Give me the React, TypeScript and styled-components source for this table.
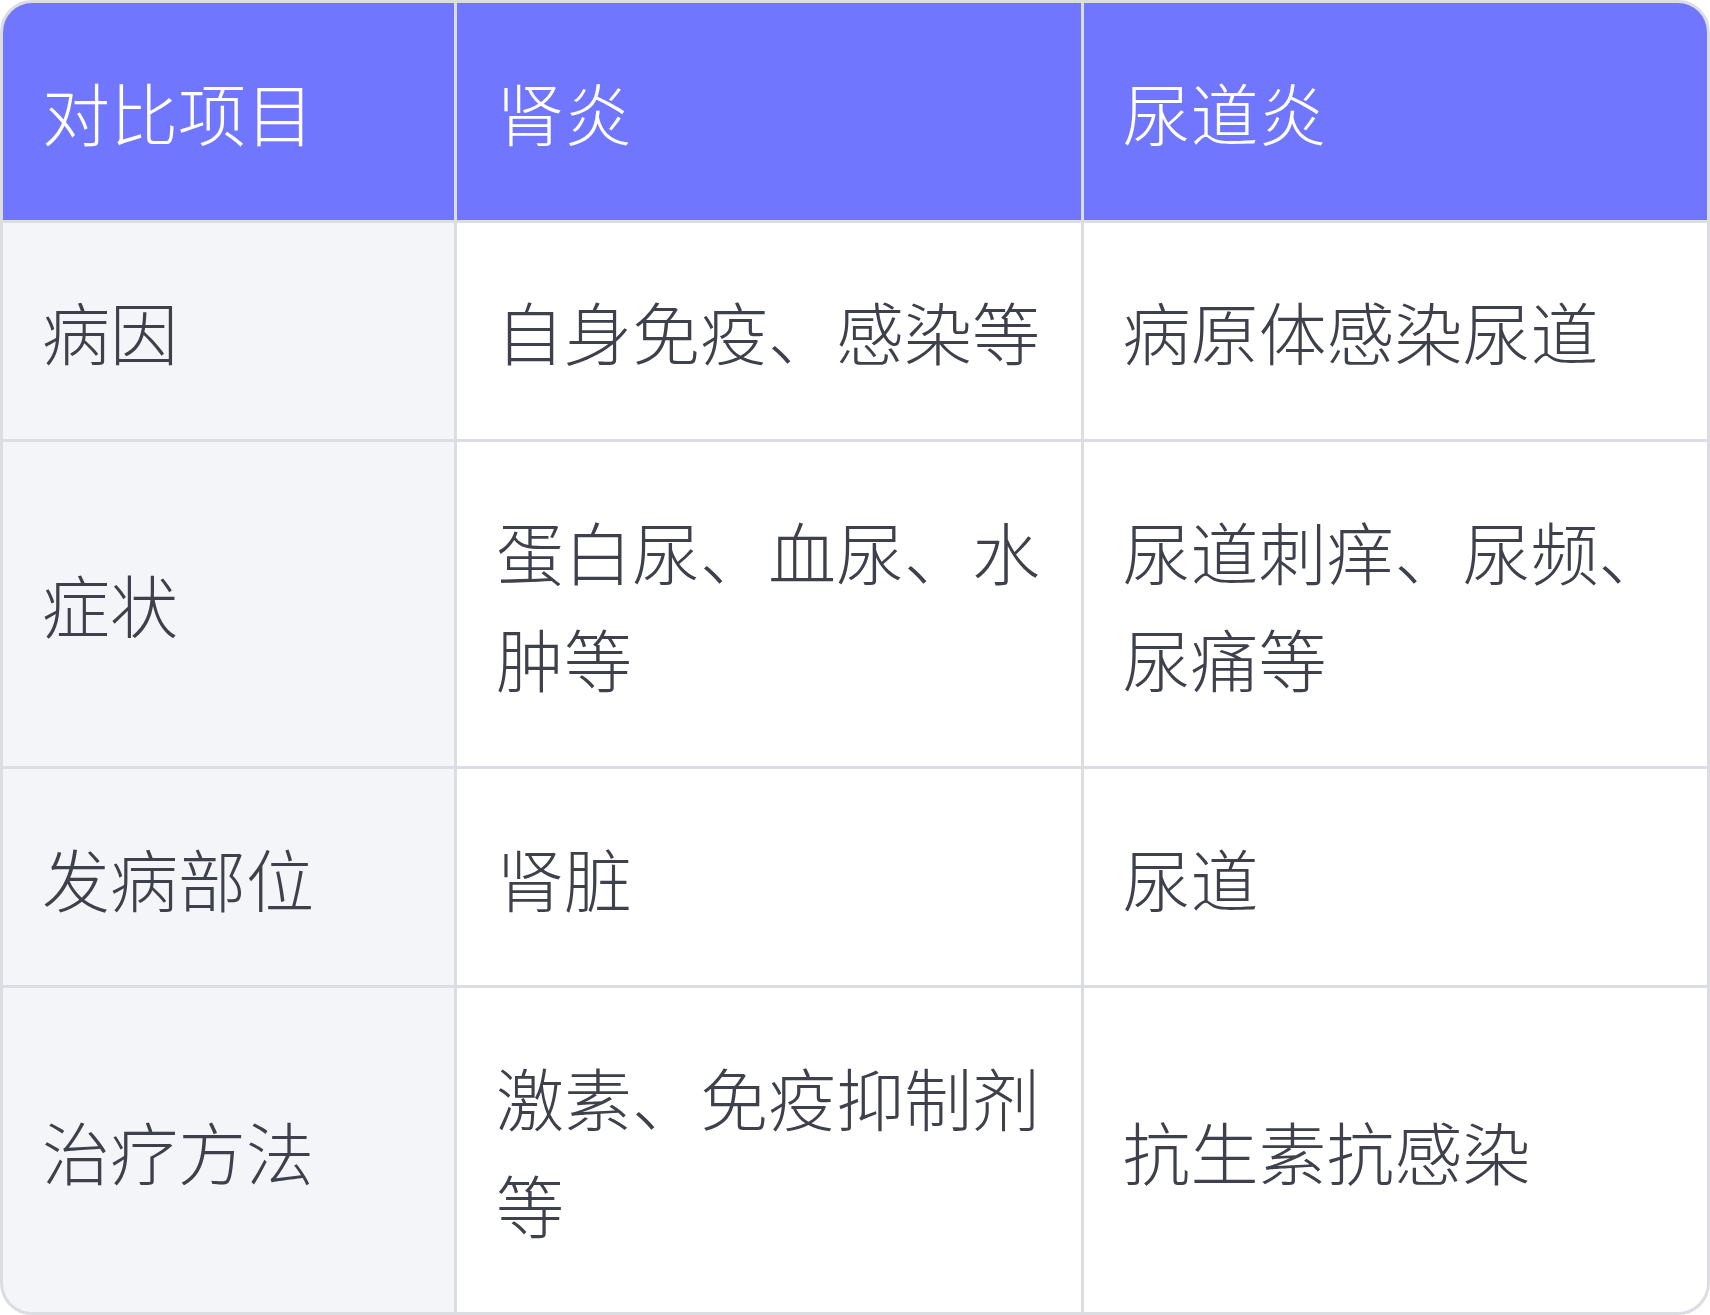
import React from 'react';
import styled, { createGlobalStyle } from 'styled-components';

const rows: [string, string, string][] = [
  ['病因', '自身免疫、感染等', '病原体感染尿道'],
  ['症状', '蛋白尿、血尿、水肿等', '尿道刺痒、尿频、尿痛等'],
  ['发病部位', '肾脏', '尿道'],
  ['治疗方法', '激素、免疫抑制剂等', '抗生素抗感染'],
];

export default function App() {
  return (
    <>
      <GlobalStyle />
      <Table>
        <Cell variant="head">对比项目</Cell>
        <Cell variant="head">肾炎</Cell>
        <Cell variant="head">尿道炎</Cell>
        {rows.map(([label, a, b]) => (
          <React.Fragment key={label}>
            <Cell variant="label">{label}</Cell>
            <Cell>{a}</Cell>
            <Cell>{b}</Cell>
          </React.Fragment>
        ))}
      </Table>
    </>
  );
}

const GlobalStyle = createGlobalStyle`
  html, body {
    margin: 0;
    padding: 0;
    background: #ffffff;
  }
  body {
    font-family: "Noto Sans CJK SC", "Noto Sans", sans-serif;
  }
`;

const Table = styled.div`
  box-sizing: border-box;
  width: 1710px;
  height: 1315px;
  display: grid;
  grid-template-columns: 451px 1fr 1fr;
  gap: 3px;
  background: #dcdde2;
  border: 3px solid #dcdde2;
  border-radius: 32px;
  overflow: hidden;
`;

interface CellProps {
  variant?: 'head' | 'label' | 'body';
}

const Cell = styled.div<CellProps>`
  display: flex;
  align-items: center;
  box-sizing: border-box;
  padding: 54.75px 36px 54.75px 39px;
  font-size: 68px;
  line-height: 107px;
  font-weight: 300;
  word-break: break-all;
  color: ${({ variant }) => (variant === 'head' ? '#ffffff' : '#3e414c')};
  background: ${({ variant }) =>
    variant === 'head' ? '#7176ff' : variant === 'label' ? '#f4f5f9' : '#ffffff'};
`;
